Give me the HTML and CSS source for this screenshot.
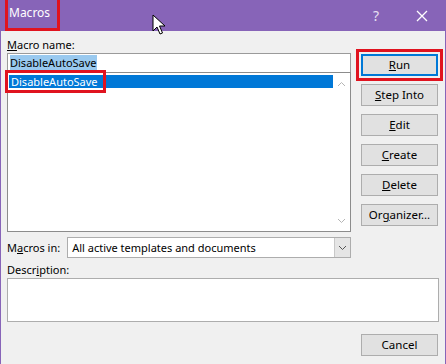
FILE: index.html
```html
<!DOCTYPE html>
<html lang="en">
<head>
  <meta charset="UTF-8" />
  <title>Macros</title>
  <link rel="stylesheet" href="styles.css">
</head>
<body>
  <div class="dialog">
    <div class="titlebar">
      <span class="title">Macros</span>
      <span class="help">?</span>
      <svg class="close" width="12" height="12" viewBox="0 0 12 12">
        <path d="M1 1L11 11M11 1L1 11" stroke="#fff" stroke-width="1.3" fill="none"/>
      </svg>
      <!-- mouse pointer over the title bar -->
      <svg class="pointer" width="14" height="22" viewBox="0 0 14 22">
        <path d="M1 1L1 17L5 13L8 20L10.5 19L7.5 12L13 12Z" fill="#fff" stroke="#000" stroke-width="1"/>
      </svg>
    </div>

    <div class="content">
      <div class="top">
        <div class="left">
          <div class="label"><u>M</u>acro name:</div>
          <div class="name-input"><span class="sel">DisableAutoSave</span></div>
          <div class="list">
            <div class="items">
              <div class="item active"><span>DisableAutoSave</span></div>
            </div>
            <div class="scroll">
              <svg width="9" height="6" viewBox="0 0 9 6"><path d="M1 5L4.5 1.5L8 5" stroke="#b5b5b5" fill="none"/></svg>
              <svg width="9" height="6" viewBox="0 0 9 6"><path d="M1 1L4.5 4.5L8 1" stroke="#b5b5b5" fill="none"/></svg>
            </div>
          </div>
          <div class="macros-in">
            <span class="label">M<u>a</u>cros in:</span>
            <div class="combo">
              <span class="combo-text">All active templates and documents</span>
              <span class="combo-btn">
                <svg width="9" height="6" viewBox="0 0 9 6"><path d="M1 1L4.5 4.5L8 1" stroke="#555" fill="none"/></svg>
              </span>
            </div>
          </div>
        </div>

        <div class="buttons">
          <button class="btn default"><u>R</u>un</button>
          <button class="btn"><u>S</u>tep Into</button>
          <button class="btn"><u>E</u>dit</button>
          <button class="btn"><u>C</u>reate</button>
          <button class="btn"><u>D</u>elete</button>
          <button class="btn">Or<u>g</u>anizer...</button>
        </div>
      </div>

      <div class="label desc-label">Descr<u>i</u>ption:</div>
      <div class="desc"></div>

      <div class="footer">
        <button class="btn">Cancel</button>
      </div>
    </div>
  </div>
</body>
</html>
```

FILE: styles.css
```css
body {
  margin: 0;
  font-family: "Noto Sans", "Open Sans", sans-serif;
  font-size: 11px;
  color: #000;
  background: #f0f0f0;
}

.dialog {
  width: 446px;
  height: 364px;
  box-sizing: border-box;
  border-left: 1px solid #8764b8;
  border-right: 1px solid #8764b8;
  background: #f0f0f0;
  overflow: hidden;
}

.titlebar {
  height: 31px;
  background: #8764b8;
  display: flex;
  align-items: center;
  position: relative;
  color: #fff;
}

.title {
  font-size: 12px;
  margin-left: 4px;
  padding: 4px 7px 5px 1px;
  border: 3px solid #e0131f;
  border-top: 0;
  height: 20px;
  line-height: 20px;
  margin-top: -2px;
}

.help {
  margin-left: auto;
  font-size: 14px;
  margin-right: 37px;
  color: #e8e0f2;
}

.close {
  margin-right: 17px;
}

.pointer {
  position: absolute;
  left: 151px;
  top: 14px;
}

.content {
  padding: 0 7px 0 6px;
}

.top {
  display: flex;
  gap: 10px;
}

.left {
  width: 344px;
}

.label {
  height: 16px;
  line-height: 16px;
}

.left > .label {
  margin-top: 6px;
}

.name-input {
  height: 20px;
  box-sizing: border-box;
  border: 1px solid #9a9a9a;
  background: #fff;
  padding: 2px 2px;
  line-height: 14px;
}

.sel {
  background: #99c9ef;
}

.list {
  height: 160px;
  box-sizing: border-box;
  margin-top: -1px;
  border: 1px solid #8c8c8c;
  background: #fff;
  display: flex;
}

.items {
  flex: 1;
  padding-top: 2px;
}

.item {
  height: 13px;
  line-height: 13px;
  background: #0078d7;
  color: #fff;
  padding-left: 2px;
  margin-left: 1px;
  position: relative;
}

.item.active span {
  position: relative;
}

.item.active::after {
  content: "";
  position: absolute;
  left: -4px;
  top: -5px;
  width: 95px;
  height: 17px;
  border: 3px solid #e0131f;
}

.scroll {
  width: 17px;
  display: flex;
  flex-direction: column;
  justify-content: space-between;
  align-items: center;
  padding: 8px 0 7px;
}

.macros-in {
  display: flex;
  align-items: center;
  margin-top: 5px;
  gap: 7px;
}

.combo {
  flex: 1;
  height: 21px;
  box-sizing: border-box;
  border: 1px solid #adadad;
  background: #fff;
  display: flex;
  align-items: center;
}

.combo-text {
  flex: 1;
  padding-left: 4px;
}

.combo-btn {
  width: 16px;
  height: 19px;
  box-sizing: border-box;
  border-left: 1px solid #c8c8c8;
  background: #e5e5e5;
  display: flex;
  align-items: center;
  justify-content: center;
}

.buttons {
  display: flex;
  flex-direction: column;
  gap: 8px;
  padding-top: 23px;
}

.btn {
  width: 77px;
  height: 22px;
  box-sizing: border-box;
  border: 1px solid #adadad;
  background: #e1e1e1;
  font-family: inherit;
  font-size: 11.5px;
  color: #000;
  padding: 0;
  line-height: 18px;
}

.btn.default {
  border: 2px solid #0078d7;
  outline: 3px solid #e0131f;
  outline-offset: 2px;
}

.desc-label {
  margin-top: 4px;
}

.desc {
  height: 44px;
  box-sizing: border-box;
  border: 1px solid #adadad;
  background: #fff;
  margin-top: 0;
  width: 432px;
}

.footer {
  display: flex;
  justify-content: flex-end;
  margin-top: 12px;
}
```
